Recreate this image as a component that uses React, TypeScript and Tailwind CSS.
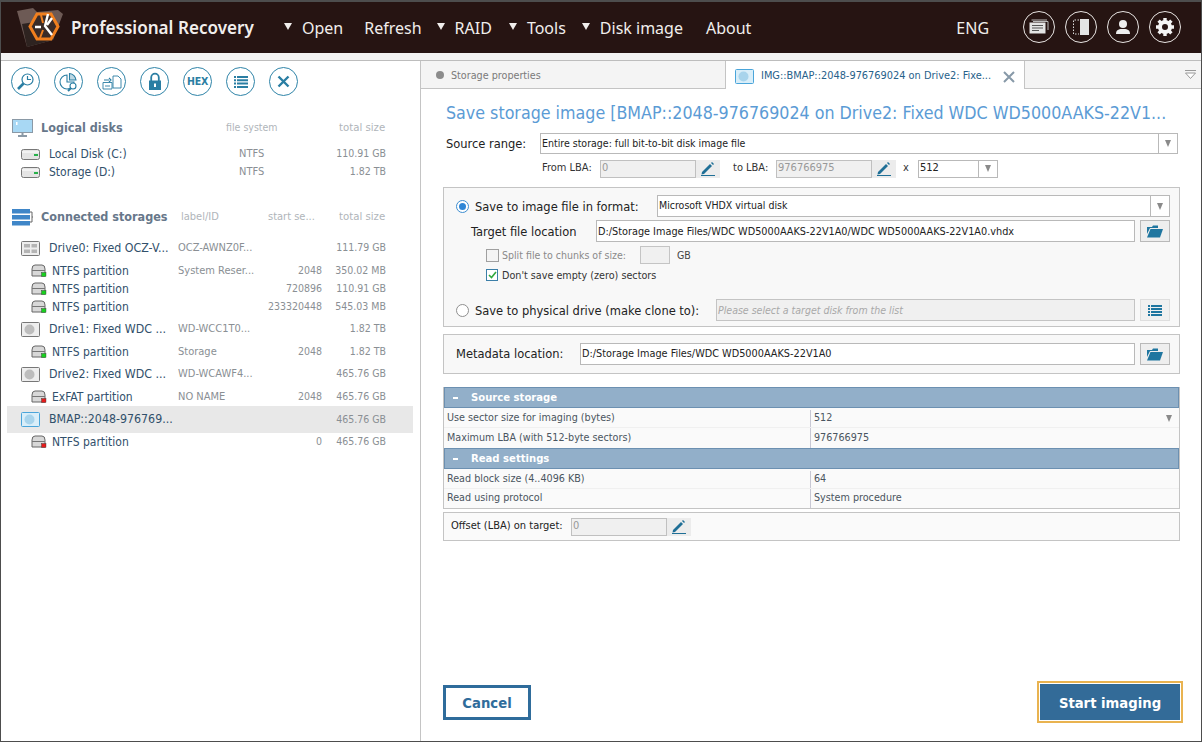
import { ReactNode } from "react";

const MENU = [
  { label: "Open", arrow: true, cls: "ml-[28px]" },
  { label: "Refresh", arrow: false, cls: "ml-[21px]" },
  { label: "RAID", arrow: true, cls: "ml-[15px]" },
  { label: "Tools", arrow: true, cls: "ml-[17px]" },
  { label: "Disk image", arrow: true, cls: "ml-[16px]" },
  { label: "About", arrow: false, cls: "ml-[23px]" },
];

function Circle({ children, dark }: { children: ReactNode; dark?: boolean }) {
  return (
    <div
      className={
        dark
          ? "w-[32px] h-[32px] rounded-full border border-[#e8e4e2] flex items-center justify-center"
          : "w-[29px] h-[29px] rounded-full border border-[#2f84a8] flex items-center justify-center bg-white"
      }
    >
      {children}
    </div>
  );
}

function Logo() {
  return (
    <svg width="48" height="42" viewBox="0 0 48 42" className="ml-[15px] shrink-0">
      <path d="M1 4 L17 1 L21 5 L42 3 L47 7 L37 33 L11 40 Z" fill="#6d5a55" />
      <path d="M6 17 L36 12 L37 33 L11 40 Z" fill="#2e2320" />
      <path d="M21 7 H35 L42 19.5 L35 32 H21 L14 19.5 Z" fill="#3a2b27" stroke="#f07f1e" strokeWidth="3" />
      <path d="M19 20 H25 M32 7 L29 19 L36 28 M36 11 L31 18" stroke="#fff" strokeWidth="2.4" fill="none" />
      <path d="M25 8 L27 16 M24 31 L27 23" stroke="#f07f1e" strokeWidth="2" fill="none" />
    </svg>
  );
}

function HeaderBar() {
  return (
    <div className="h-[51px] shrink-0 bg-[#261412] flex items-center text-[#f1eeec] [font-stretch:normal]">
      <Logo />
      <div className="ml-[7px] text-[17.1px] font-semibold whitespace-nowrap w-[185px] mt-[1px] [font-family:'Noto_Sans',sans-serif]">Professional Recovery</div>
      {MENU.map((m) => (
        <div key={m.label} className={`flex items-center mt-[1px] ${m.cls}`}>
          {m.arrow && <span className="w-0 h-0 mr-[10px] mb-[3px] border-l-[4px] border-r-[4px] border-t-[7px] border-l-transparent border-r-transparent border-t-[#f1eeec]" />}
          <span className="text-[16px] whitespace-nowrap [font-family:'Noto_Sans',sans-serif]">{m.label}</span>
        </div>
      ))}
      <span className="ml-[205px] text-[16px] mt-[1px] [font-family:'Noto_Sans',sans-serif]">ENG</span>
      <div className="ml-[34px] flex gap-[10px] -mt-[1px]">
        <Circle dark>
          <svg width="20" height="16" viewBox="0 0 20 16">
            <path d="M4 2.5 H19 V11 M2.5 1 H18" stroke="#bbb" strokeWidth="1" fill="none" />
            <rect x="0.5" y="3.5" width="16" height="11" fill="#e4e4e4" />
            <path d="M3 6.5 H14 M3 9 H14 M3 11.5 H10" stroke="#555" strokeWidth="1" />
          </svg>
        </Circle>
        <Circle dark>
          <svg width="18" height="18" viewBox="0 0 18 18">
            <path d="M7 2 H1.5 V16 H7" stroke="#ddd" strokeDasharray="1.5 1.5" fill="none" />
            <rect x="8" y="1" width="9" height="16" fill="#e4e4e4" />
          </svg>
        </Circle>
        <Circle dark>
          <svg width="16" height="16" viewBox="0 0 16 16" fill="#eee">
            <circle cx="8" cy="5" r="4" />
            <path d="M1 15 C1 10 5 10 8 10 C11 10 15 10 15 15 Z" />
          </svg>
        </Circle>
        <Circle dark>
          <svg width="20" height="20" viewBox="0 0 20 20">
            <circle cx="10" cy="10" r="5" fill="none" stroke="#f4f4f4" strokeWidth="4" />
            <path d="M10 1 V5 M10 15 V19 M1 10 H5 M15 10 H19 M3.6 3.6 L6.5 6.5 M13.5 13.5 L16.4 16.4 M16.4 3.6 L13.5 6.5 M6.5 13.5 L3.6 16.4" stroke="#f4f4f4" strokeWidth="3.4" />
          </svg>
        </Circle>
      </div>
    </div>
  );
}

function Toolbar() {
  const c = "#2a7ea3";
  return (
    <div className="flex gap-[14px] pl-[10px] pt-[6px] h-[44px] shrink-0">
      <Circle>
        <svg width="19" height="19" viewBox="0 0 19 19" fill="none" stroke={c} strokeWidth="1.2">
          <circle cx="11.5" cy="7.5" r="5.5" />
          <path d="M11.5 4 V7.5 H15" />
          <path d="M7.5 11.5 L2 17" strokeWidth="2.6" />
        </svg>
      </Circle>
      <Circle>
        <svg width="20" height="20" viewBox="0 0 20 20" fill="none" stroke={c} strokeWidth="1.1">
          <path d="M8 3 A7 7 0 1 0 15 10 H8 Z" />
          <path d="M10.5 1.5 A7 7 0 0 1 17 8 H10.5 Z" fill="#bcd8e4" />
          <circle cx="14" cy="14" r="3" fill="#fff" />
          <path d="M12 16 L9 19" strokeWidth="2" />
        </svg>
      </Circle>
      <Circle>
        <svg width="22" height="18" viewBox="0 0 22 18" fill="none" stroke={c} strokeWidth="0.9">
          <path d="M12 3 H17 L20 6 V15 H12 Z" />
          <path d="M2 9.5 H11 V16 H2 Z M4 13 H9" />
          <path d="M3 7 H8 M8 5 L10 7 L8 9" strokeWidth="1.1" />
        </svg>
      </Circle>
      <Circle>
        <svg width="14" height="19" viewBox="0 0 14 19" fill="none">
          <path d="M3.2 9 V5.5 A3.8 3.8 0 0 1 10.8 5.5 V9" stroke={c} strokeWidth="1.8" />
          <rect x="1" y="8.5" width="12" height="9.5" fill={c} />
          <rect x="6" y="11.5" width="2" height="3.5" fill="#fff" />
        </svg>
      </Circle>
      <Circle>
        <span className="text-[10.5px] font-bold text-[#2a7ea3] tracking-tight">HEX</span>
      </Circle>
      <Circle>
        <svg width="14" height="12" viewBox="0 0 14 12" fill={c}>
          <path d="M0 0 H2 V2 H0 Z M3 0 H14 V2 H3 Z M0 3.3 H2 V5.3 H0 Z M3 3.3 H14 V5.3 H3 Z M0 6.6 H2 V8.6 H0 Z M3 6.6 H14 V8.6 H3 Z M0 9.9 H2 V11.9 H0 Z M3 9.9 H14 V11.9 H3 Z" />
        </svg>
      </Circle>
      <Circle>
        <svg width="13" height="13" viewBox="0 0 13 13">
          <path d="M1.5 1.5 L11.5 11.5 M11.5 1.5 L1.5 11.5" stroke={c} strokeWidth="2.4" />
        </svg>
      </Circle>
    </div>
  );
}

function LogicalIcon() {
  return (
    <svg width="19" height="11" viewBox="0 0 19 11" className="shrink-0">
      <rect x="0.5" y="0.5" width="18" height="10" rx="2" fill="#e4e4e4" stroke="#777" />
      <path d="M1 3 H18" stroke="#fff" />
      <rect x="13" y="5" width="4" height="2" fill="#27b14a" />
    </svg>
  );
}

function PartIcon({ red }: { red?: boolean }) {
  return (
    <svg width="17" height="14" viewBox="0 0 17 14" className="shrink-0">
      <path d="M1 5 Q1 1 4 1 H11 Q14 1 14 5 V12 H1 Z" fill="#d8d8d8" stroke="#666" />
      <path d="M1 6.5 H14" stroke="#777" />
      <rect x="10.5" y="8.5" width="4.5" height="4" fill={red ? "#e51c1c" : "#18cf1e"} stroke="#333" strokeWidth="0.4" />
    </svg>
  );
}

function DriveIcon({ kind }: { kind: "ssd" | "hdd" | "bmap" }) {
  if (kind === "ssd") {
    return (
      <svg width="19" height="15" viewBox="0 0 19 15" className="shrink-0">
        <rect x="0.5" y="0.5" width="18" height="14" rx="1" fill="#eee" stroke="#777" />
        <path d="M3 3 H9 V6.5 H3 Z M10.5 3 H16 V6.5 H10.5 Z M3 8.5 H9 V12 H3 Z M10.5 8.5 H16 V12 H10.5 Z" fill="#b4b4b4" />
      </svg>
    );
  }
  const bmap = kind === "bmap";
  return (
    <svg width="19" height="15" viewBox="0 0 19 15" className="shrink-0">
      <rect x="0.5" y="0.5" width="18" height="14" rx="1" fill={bmap ? "#d9eef9" : "#eee"} stroke={bmap ? "#4aa5da" : "#777"} />
      <circle cx="8.5" cy="7.5" r="5" fill={bmap ? "#a8d4ec" : "#bdbdbd"} />
    </svg>
  );
}

type Row = {
  name: string;
  label?: string;
  start?: string;
  size: string;
  h: string;
  drive?: "ssd" | "hdd" | "bmap";
  red?: boolean;
  selected?: boolean;
};

const ROWS: Row[] = [
  { name: "Drive0: Fixed OCZ-V...", label: "OCZ-AWNZ0F...", size: "111.79 GB", h: "h-[18px]", drive: "ssd" },
  { name: "NTFS partition", label: "System Reser...", start: "2048", size: "350.02 MB", h: "mt-[5px] h-[18px]" },
  { name: "NTFS partition", start: "720896", size: "110.91 GB", h: "h-[18px]" },
  { name: "NTFS partition", start: "233320448", size: "545.03 MB", h: "h-[18px]" },
  { name: "Drive1: Fixed WDC ...", label: "WD-WCC1T0...", size: "1.82 TB", h: "mt-[4px] h-[18px]", drive: "hdd" },
  { name: "NTFS partition", label: "Storage", start: "2048", size: "1.82 TB", h: "mt-[5px] h-[18px]" },
  { name: "Drive2: Fixed WDC ...", label: "WD-WCAWF4...", size: "465.76 GB", h: "mt-[4px] h-[18px]", drive: "hdd" },
  { name: "ExFAT partition", label: "NO NAME", start: "2048", size: "465.76 GB", h: "mt-[5px] h-[18px]", red: true },
  { name: "BMAP::2048-976769...", size: "465.76 GB", h: "h-[27px]", drive: "bmap", selected: true },
  { name: "NTFS partition", start: "0", size: "465.76 GB", h: "h-[18px]", red: true },
];

function LeftPanel() {
  return (
    <div className="w-[420px] shrink-0 border-r border-[#c4c4c4] flex flex-col">
      <Toolbar />
      <div className="flex items-center h-[20px] mt-[13px] pl-[11px] text-[11px] text-[#b0b5ba]">
        <svg width="21" height="18" viewBox="0 0 21 18" className="shrink-0">
          <rect x="0.5" y="0.5" width="20" height="13" fill="#a8d8f4" stroke="#8a99a6" />
          <path d="M6 17 H15 M10.5 14 V17" stroke="#8a99a6" strokeWidth="2" />
          <rect x="4" y="3" width="1.5" height="3" fill="#fff" />
        </svg>
        <span className="ml-[8px] w-[185px] text-[12.5px] font-bold text-[#67778a]">Logical disks</span>
        <span className="w-[113px] text-[10.5px]">file system</span>
        <span className="text-[11.3px]">total size</span>
      </div>
      <div className="mt-[7px]">
        <div className="h-[18px] flex items-center pl-[20px]">
          <LogicalIcon />
          <span className="ml-[9px] w-[190px] text-[12px] text-[#31506b]">Local Disk (C:)</span>
          <span className="w-[70px] text-[11px] text-[#8a8f94]">NTFS</span>
          <span className="w-[77px] text-right text-[10.5px] text-[#8a8f94]">110.91 GB</span>
        </div>
        <div className="h-[18px] flex items-center pl-[20px]">
          <LogicalIcon />
          <span className="ml-[9px] w-[190px] text-[12px] text-[#31506b]">Storage (D:)</span>
          <span className="w-[70px] text-[11px] text-[#8a8f94]">NTFS</span>
          <span className="w-[77px] text-right text-[10.5px] text-[#8a8f94]">1.82 TB</span>
        </div>
      </div>
      <div className="flex items-center h-[20px] mt-[26px] pl-[11px] text-[11px] text-[#b0b5ba]">
        <svg width="21" height="17" viewBox="0 0 21 17" className="shrink-0">
          <path d="M0 0 H18 V4.5 H0 Z M0 6 H18 V10.5 H0 Z M0 12 H18 V16.5 H0 Z" fill="#3f86c8" />
          <path d="M18 3 H20 V13 H18 M20 8 H21" stroke="#666" fill="none" />
        </svg>
        <span className="ml-[8px] w-[140px] text-[12.5px] font-bold text-[#67778a] whitespace-nowrap">Connected storages</span>
        <span className="w-[87px]">label/ID</span>
        <span className="w-[71px]">start se...</span>
        <span className="text-[11.3px]">total size</span>
      </div>
      <div className="mt-[12px]">
        {ROWS.map((r, i) => (
          <div key={i} className={`flex items-center ml-[6px] mr-[7px] pr-[27px] ${r.h} ${r.selected ? "bg-[#e8e8e8]" : ""}`}>
            {r.drive ? (
              <div className="flex items-center pl-[14px] w-[171px] shrink-0">
                <DriveIcon kind={r.drive} />
                <span className="ml-[9px] text-[12.3px] text-[#31506b] whitespace-nowrap">{r.name}</span>
              </div>
            ) : (
              <div className="flex items-center pl-[24px] w-[171px] shrink-0">
                <PartIcon red={r.red} />
                <span className="ml-[4px] text-[12px] text-[#31506b] whitespace-nowrap">{r.name}</span>
              </div>
            )}
            <span className="w-[90px] text-[11px] text-[#8a8f94] whitespace-nowrap">{r.label}</span>
            <span className="w-[54px] text-right text-[10.5px] text-[#8a8f94]">{r.start}</span>
            <span className="flex-1 text-right text-[10.5px] text-[#8a8f94] whitespace-nowrap">{r.size}</span>
          </div>
        ))}
      </div>
    </div>
  );
}

function Caret() {
  return <span className="w-0 h-0 border-l-[3.5px] border-r-[3.5px] border-t-[7px] border-l-transparent border-r-transparent border-t-[#8a8a8a]" />;
}

function Pen() {
  return (
    <svg width="14" height="14" viewBox="0 0 14 14">
      <path d="M1 10 L9 2 L11 4 L3 12 L0.5 12.5 Z M10 1 L11 0 L13 2 L12 3 Z" fill="#1f6f96" />
      <path d="M0 13.5 H14" stroke="#1f6f96" />
    </svg>
  );
}

function PenButton() {
  return <div className="w-[24px] h-[18px] bg-[#ececec] flex items-center justify-center"><Pen /></div>;
}

function FolderButton() {
  return (
    <div className="w-[30px] h-[22px] bg-[#eeeeee] border border-[#b9b9b9] flex items-center justify-center shrink-0">
      <svg width="16" height="13" viewBox="0 0 16 13" fill="#1f76a0">
        <path d="M0 2 H5 L6 0.5 H11 V3 H3 L0 9 Z" />
        <path d="M3.5 4 H16 L13 12.5 H0 Z" />
      </svg>
    </div>
  );
}

function Radio({ on }: { on?: boolean }) {
  return (
    <span className={`w-[13px] h-[13px] rounded-full border shrink-0 flex items-center justify-center bg-white ${on ? "border-[#3c8dd0]" : "border-[#8f8f8f]"}`}>
      {on && <span className="w-[7px] h-[7px] rounded-full bg-[#2f86d6]" />}
    </span>
  );
}

function TableHead({ title }: { title: string }) {
  return (
    <div className="h-[21px] bg-[#92afc9] border border-[#6c90b1] flex items-center text-white text-[11.2px] font-bold">
      <span className="w-[5px] h-[2px] bg-white ml-[8px]" />
      <span className="ml-[13px] pt-[2px]">{title}</span>
    </div>
  );
}

function TableRow({ left, right, h, line, caret }: { left: string; right: string; h: string; line?: boolean; caret?: boolean }) {
  return (
    <div className={`flex text-[10.7px] ${h} ${line ? "border-b border-[#f0f0f0] pt-[2px]" : ""}`}>
      <div className="w-[367px] pl-[3px] flex items-center border-r border-[#c8c8d4] text-[#4a5560]">{left}</div>
      <div className="flex-1 pl-[3px] pr-[7px] flex items-center justify-between text-[#4a5560]">
        {right}
        {caret && <Caret />}
      </div>
    </div>
  );
}

function RightPanel() {
  return (
    <div className="flex-1 flex flex-col min-w-0">
      <div className="h-[28px] shrink-0 flex bg-[#f4f4f4]">
        <div className="w-[304px] border-b border-[#c4c4c4] flex items-center pl-[15px] pt-[4px]">
          <span className="w-[8px] h-[8px] rounded-full bg-[#8c8c8c] -mt-[3px]" />
          <span className="ml-[7px] text-[10.7px] text-[#7a7a7a]">Storage properties</span>
        </div>
        <div className="w-[300px] bg-white border-l border-r border-[#c4c4c4] flex items-center pl-[9px] pt-[3px]">
          <DriveIcon kind="bmap" />
          <span className="ml-[7px] text-[10.9px] text-[#27618a] whitespace-nowrap">IMG::BMAP::2048-976769024 on Drive2: Fixe...</span>
          <svg width="12" height="12" viewBox="0 0 12 12" className="ml-auto mr-[9px]"><path d="M1 1 L11 11 M11 1 L1 11" stroke="#8799a8" strokeWidth="2" /></svg>
        </div>
        <div className="flex-1 border-b border-[#c4c4c4] flex items-center justify-end pr-[5px]">
          <svg width="11" height="9" viewBox="0 0 11 9"><path d="M0 0.5 H11" stroke="#999" /><path d="M0.5 3 H10.5 L5.5 8.5 Z" fill="#fff" stroke="#999" /></svg>
        </div>
      </div>
      <div className="flex-1 flex flex-col pl-[22px] pr-[21px] bg-white min-h-0">
        <div className="mt-[14px] ml-[3px] h-[21px] text-[17.7px] leading-[21px] text-[#5b9bd5] whitespace-nowrap">Save storage image [BMAP::2048-976769024 on Drive2: Fixed WDC WD5000AAKS-22V1...</div>
        <div className="flex items-center mt-[9px] mr-[2px]">
          <span className="w-[97px] pl-[3px] text-[12.75px] text-[#222]">Source range:</span>
          <div className="flex-1 h-[21px] border border-[#b9b9b9] flex items-center">
            <span className="flex-1 pl-[1px] text-[10.5px] text-[#222]">Entire storage: full bit-to-bit disk image file</span>
            <span className="w-[19px] h-full border-l border-[#b9b9b9] flex items-center justify-center"><Caret /></span>
          </div>
        </div>
        <div className="flex items-center mt-[5px] h-[19px] text-[11px] text-[#333]">
          <span className="ml-[99px] w-[58px]">From LBA:</span>
          <div className="w-[96px] h-[18px] bg-[#f0f0f0] border border-[#c0c0c0] pl-[1px] flex items-center text-[#999]">0</div>
          <PenButton />
          <span className="ml-[13px] w-[43px]">to LBA:</span>
          <div className="w-[96px] h-[18px] bg-[#f0f0f0] border border-[#c0c0c0] pl-[1px] flex items-center text-[#999]">976766975</div>
          <PenButton />
          <span className="ml-[7px] w-[15px]">x</span>
          <div className="w-[80px] h-[18px] border border-[#b9b9b9] flex items-center">
            <span className="flex-1 pl-[1px] text-[#222]">512</span>
            <span className="w-[19px] h-full border-l border-[#b9b9b9] flex items-center justify-center"><Caret /></span>
          </div>
        </div>

        <div className="mt-[9px] h-[140px] bg-[#f8f8f8] border border-[#c4c4c4] pl-[12px] pr-[9px] pt-[7px]">
          <div className="flex items-center h-[22px]">
            <Radio on />
            <span className="ml-[6px] w-[182px] pt-[2px] text-[12.75px] text-[#222] whitespace-nowrap">Save to image file in format:</span>
            <div className="flex-1 h-[22px] bg-white border border-[#b9b9b9] flex items-center">
              <span className="flex-1 pl-[1px] text-[10.5px] text-[#222]">Microsoft VHDX virtual disk</span>
              <span className="w-[19px] h-full border-l border-[#b9b9b9] flex items-center justify-center"><Caret /></span>
            </div>
          </div>
          <div className="flex items-center h-[22px] mt-[3px]">
            <span className="ml-[15px] w-[125px] pt-[2px] text-[12.75px] text-[#222] whitespace-nowrap">Target file location</span>
            <div className="flex-1 h-[22px] bg-white border border-[#b9b9b9] flex items-center pl-[1px] pt-[2px] text-[10.8px] text-[#222]">D:/Storage Image Files/WDC WD5000AAKS-22V1A0/WDC WD5000AAKS-22V1A0.vhdx</div>
            <div className="ml-[5px]"><FolderButton /></div>
          </div>
          <div className="flex items-center h-[18px] mt-[4px] text-[10.5px]">
            <span className="ml-[30px] w-[13px] h-[13px] border border-[#a0a0a0] bg-[#f4f4f4]" />
            <span className="ml-[3px] w-[138px] pt-[2px] text-[#8a8a8a]">Split file to chunks of size:</span>
            <span className="w-[30px] h-[18px] border border-[#c4c4c4] bg-[#f0f0f0]" />
            <span className="ml-[7px] pt-[2px] text-[#444]">GB</span>
          </div>
          <div className="flex items-center h-[18px] mt-[2px] text-[10.7px]">
            <span className="ml-[30px] w-[12px] h-[12px] border border-[#3c7fa8] bg-white flex items-center justify-center">
              <svg width="9" height="8" viewBox="0 0 9 8"><path d="M1 4 L3.5 6.5 L8 1" stroke="#2fa83e" strokeWidth="1.6" fill="none" /></svg>
            </span>
            <span className="ml-[4px] pt-[2px] text-[#333]">Don't save empty (zero) sectors</span>
          </div>
          <div className="flex items-center h-[22px] mt-[15px]">
            <Radio />
            <span className="ml-[6px] w-[241px] pt-[2px] text-[12.75px] text-[#222] whitespace-nowrap">Save to physical drive (make clone to):</span>
            <div className="flex-1 h-[22px] bg-[#f0f0f0] border border-[#c4c4c4] flex items-center pl-[1px] pt-[2px] text-[10.5px] italic text-[#a8a8a8]">Please select a target disk from the list</div>
            <div className="ml-[5px] w-[30px] h-[22px] bg-[#f0f0f0] border border-[#dedede] flex items-center justify-center shrink-0">
              <svg width="14" height="11" viewBox="0 0 14 11" fill="#1f76a0"><path d="M0 0 H2 V2 H0 Z M3 0 H14 V2 H3 Z M0 3 H2 V5 H0 Z M3 3 H14 V5 H3 Z M0 6 H2 V8 H0 Z M3 6 H14 V8 H3 Z M0 9 H2 V11 H0 Z M3 9 H14 V11 H3 Z" /></svg>
            </div>
          </div>
        </div>

        <div className="mt-[7px] h-[40px] bg-[#f8f8f8] border border-[#c4c4c4] pl-[12px] pr-[9px] flex items-center">
          <span className="w-[124px] text-[12.75px] text-[#222] whitespace-nowrap">Metadata location:</span>
          <div className="flex-1 h-[22px] bg-white border border-[#b9b9b9] flex items-center pl-[1px] text-[10.8px] text-[#222]">D:/Storage Image Files/WDC WD5000AAKS-22V1A0</div>
          <div className="ml-[5px]"><FolderButton /></div>
        </div>

        <div className="mt-[13px] border-b border-x border-[#c4c4c4] bg-[#fafafa]">
          <TableHead title="Source storage" />
          <TableRow left="Use sector size for imaging (bytes)" right="512" h="h-[20px]" line caret />
          <TableRow left="Maximum LBA (with 512-byte sectors)" right="976766975" h="h-[20px]" />
          <TableHead title="Read settings" />
          <TableRow left="Read block size (4..4096 KB)" right="64" h="h-[20px]" line />
          <TableRow left="Read using protocol" right="System procedure" h="h-[19px]" />
        </div>

        <div className="mt-[3px] h-[29px] bg-[#fafafa] border border-[#c4c4c4] flex items-center pl-[7px] text-[11px] text-[#222]">
          <span className="w-[120px]">Offset (LBA) on target:</span>
          <div className="w-[96px] h-[18px] bg-[#f0f0f0] border border-[#c0c0c0] pl-[1px] flex items-center text-[#999]">0</div>
          <PenButton />
        </div>

        <div className="mt-auto mb-[18px] flex justify-between items-center">
          <div className="w-[88px] h-[35px] border-[3px] border-[#2f6c9b] flex items-center justify-center pt-[2px] text-[14.7px] font-bold text-[#2f6c9b]">Cancel</div>
          <div className="w-[146px] h-[42px] border-2 border-[#e9b350] p-[1px] -mr-[3px]">
            <div className="w-full h-full bg-[#336b98] flex items-center justify-center pt-[2px] text-[14.7px] font-bold text-white">Start imaging</div>
          </div>
        </div>
      </div>
    </div>
  );
}

export default function App() {
  return (
    <div className="w-[1202px] h-[742px] bg-white border border-t-2 border-[#4d4d4d] flex flex-col overflow-hidden [font-family:'DejaVu_Sans',sans-serif] [font-stretch:condensed]">
      <HeaderBar />
      <div className="h-[8px] shrink-0 bg-[#f2f2f2] border-b border-[#bdbdbd]" />
      <div className="flex-1 flex min-h-0">
        <LeftPanel />
        <RightPanel />
      </div>
    </div>
  );
}
